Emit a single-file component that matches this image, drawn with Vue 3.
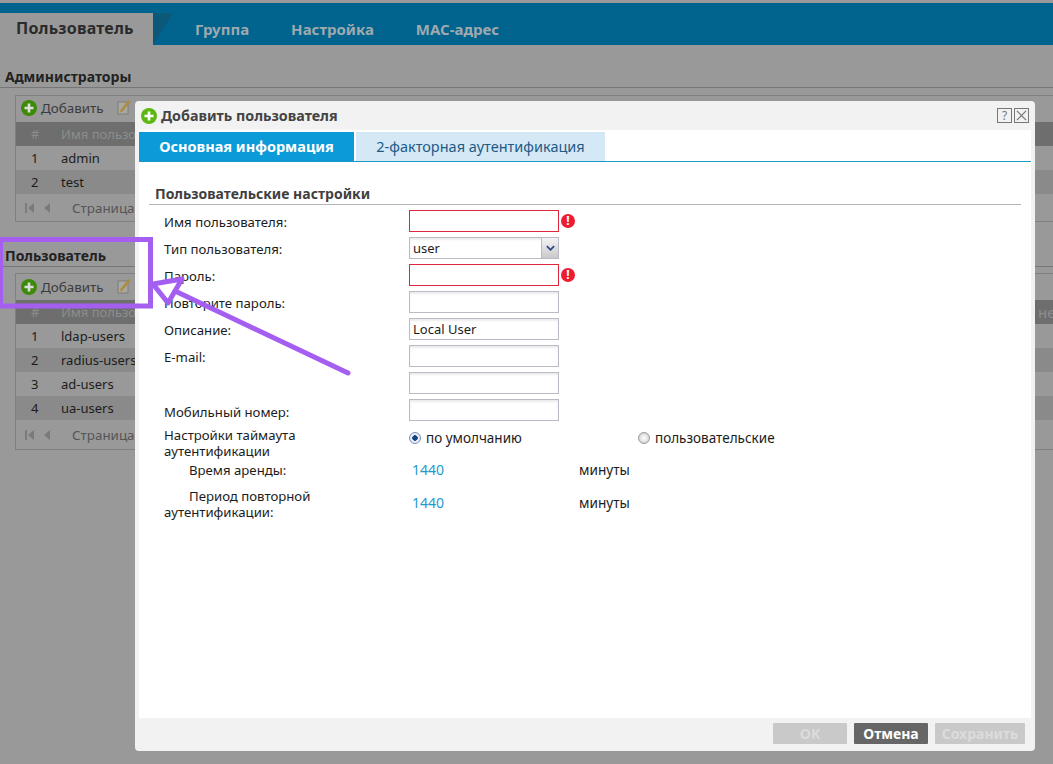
<template>
  <div class="page">
    <div class="topbar">
      <a class="maintab active">Пользователь</a>
      <span class="notch"></span>
      <a class="maintab first">Группа</a>
      <a class="maintab">Настройка</a>
      <a class="maintab">MAC-адрес</a>
    </div>

    <section v-for="block in blocks" :key="block.title" class="block" :class="block.cls">
      <h2>{{ block.title }}</h2>
      <div class="panel">
        <div class="toolbar">
          <svg class="plus" viewBox="0 0 16 16"><circle cx="8" cy="8" r="8" fill="#3d8a0a" /><path d="M8 3.5v9M3.5 8h9" stroke="#ddd" stroke-width="2.6" /></svg>
          <span>Добавить</span>
          <svg class="edit" viewBox="0 0 14 16"><rect x="1" y="3" width="10" height="12" fill="#a8a8a0" stroke="#7f7f7a" /><path d="M3.5 11l8-10 2 1.5-8 10-2.5 1z" fill="#ae8b3c" /></svg>
        </div>
        <div class="thead"><span class="num">#</span><span>Имя пользователя</span><span class="tail">{{ block.tail }}</span></div>
        <div v-for="(name, i) in block.rows" :key="name" class="row" :class="{ alt: i % 2 }">
          <span class="num">{{ i + 1 }}</span><span>{{ name }}</span>
        </div>
        <div class="pager">
          <svg class="pg" viewBox="0 0 26 12"><path d="M1 1h2v10H1zM10 1v10L4 6zM26 1v10l-6-5z" fill="#7b7b7b" /></svg>
          <span>Страница</span>
        </div>
      </div>
    </section>

    <div class="modal">
      <header class="modal-head">
        <svg class="plus" viewBox="0 0 16 16"><circle cx="8" cy="8" r="8" fill="#5cb811" /><path d="M8 3.5v9M3.5 8h9" stroke="#fff" stroke-width="2.6" /></svg>
        <span class="modal-title">Добавить пользователя</span>
        <span class="head-btn">?</span>
        <span class="head-btn close">
          <svg viewBox="0 0 12 12"><path d="M1 1l10 10M11 1L1 11" stroke="#777" stroke-width="1.4" /></svg>
        </span>
      </header>
      <div class="modal-body">
        <div class="tabs">
          <span class="tab on">Основная информация</span>
          <span class="tab">2-факторная аутентификация</span>
        </div>
        <h3>Пользовательские настройки</h3>
        <div class="form">
          <div class="frow">
            <label>Имя пользователя:</label>
            <div class="inp bad"></div>
            <span class="err">!</span>
          </div>
          <div class="frow">
            <label>Тип пользователя:</label>
            <div class="inp select">user
              <span class="arrow"><svg viewBox="0 0 10 6"><path d="M1 1l4 4 4-4" fill="none" stroke="#2c4a86" stroke-width="2" /></svg></span>
            </div>
          </div>
          <div class="frow">
            <label>Пароль:</label>
            <div class="inp bad"></div>
            <span class="err">!</span>
          </div>
          <div class="frow"><label>Повторите пароль:</label><div class="inp"></div></div>
          <div class="frow"><label>Описание:</label><div class="inp">Local User</div></div>
          <div class="frow"><label>E-mail:</label><div class="inp"></div></div>
          <div class="frow"><label></label><div class="inp"></div></div>
          <div class="frow"><label class="low">Мобильный номер:</label><div class="inp"></div></div>
          <div class="frow tall">
            <label>Настройки таймаута аутентификации</label>
            <div class="radio-a"><i class="radio checked"></i>по умолчанию</div>
            <div class="radio-b"><i class="radio"></i>пользовательские</div>
          </div>
          <div class="frow lease">
            <label class="sub">Время аренды:</label>
            <span class="val">1440</span><span class="unit">минуты</span>
          </div>
          <div class="frow reauth">
            <label class="sub2"><span>Период повторной</span> аутентификации:</label>
            <span class="val">1440</span><span class="unit">минуты</span>
          </div>
        </div>
      </div>
      <footer class="modal-foot">
        <span class="btn off ok">OK</span>
        <span class="btn cancel">Отмена</span>
        <span class="btn off save">Сохранить</span>
      </footer>
    </div>

    <!-- пометка поверх скриншота -->
    <svg class="mark" width="1053" height="764" viewBox="0 0 1053 764">
      <rect x="0.5" y="239.5" width="150" height="66.5" fill="none" stroke="#a55ff0" stroke-width="5" />
      <path d="M348 373L175 291" stroke="#a55ff0" stroke-width="5" fill="none" stroke-linecap="round" />
      <path d="M153 284L182 279L168 303Z" stroke="#a55ff0" stroke-width="5" fill="none" stroke-linejoin="round" />
    </svg>
  </div>
</template>

<script setup>
const blocks = [
  { title: 'Администраторы', cls: 'admins', tail: 'И', rows: ['admin', 'test'] },
  { title: 'Пользователь', cls: 'users', tail: 'нен', rows: ['ldap-users', 'radius-users', 'ad-users', 'ua-users'] },
]
</script>

<style>
html, body {
  margin: 0;
  background: #999;
}
</style>

<style scoped>
.page {
  position: relative;
  width: 1053px;
  height: 764px;
  overflow: hidden;
  background: #999;
  font-family: "Noto Sans", "DejaVu Sans", sans-serif;
  font-size: 13px;
  color: #1c1c1c;
  padding-top: 3px;
  box-sizing: border-box;
}
.topbar {
  height: 42px;
  background: #00648e;
  display: flex;
  align-items: flex-end;
  font-weight: 700;
  font-size: 15px;
}
.maintab {
  height: 32px;
  line-height: 32px;
  color: #9fa9ae;
  margin-right: 42px;
}
.maintab.active {
  width: 153px;
  box-sizing: border-box;
  padding-left: 16px;
  margin: 0;
  background: #999;
  color: #2b2b2b;
  font-size: 16px;
  line-height: 30px;
  letter-spacing: 0.2px;
}
.maintab.first {
  margin-left: 22px;
}
.notch {
  width: 0;
  height: 0;
  border-top: 32px solid #0b5878;
  border-right: 20px solid transparent;
}
.block h2 {
  margin: 0;
  font-size: 14px;
  line-height: 20px;
  font-weight: 700;
  color: #222;
  padding-left: 5px;
  border-bottom: 1px solid #777;
}
.admins {
  margin-top: 22px;
}
.users {
  margin-top: 24px;
}
.panel {
  margin: 7px 0 0 15px;
  width: 1045px;
  border: 1px solid #808080;
  background: #999;
  color: #1c1c1c;
}
.users .panel {
  margin-top: 6px;
}
.toolbar {
  height: 26px;
  display: flex;
  align-items: center;
  padding: 0 0 2px 5px;
  box-sizing: border-box;
  color: #3c3c3c;
  font-size: 13.4px;
}
.users .toolbar {
  padding-bottom: 0;
}
.toolbar .plus {
  margin-right: 4px;
}
.plus {
  width: 16px;
  height: 16px;
  flex: none;
}
.edit {
  width: 14px;
  height: 16px;
  margin: -3px 0 0 13px;
}
.thead {
  height: 24px;
  display: flex;
  align-items: center;
  background: #6e6e6e;
  color: #8d8d8d;
}
.tail {
  margin-left: auto;
  overflow: hidden;
  white-space: nowrap;
  font-size: 15px;
}
.admins .tail {
  width: 9px;
}
.users .tail {
  width: 23px;
}
.row {
  height: 24px;
  display: flex;
  align-items: center;
}
.row.alt {
  background: #8a8a8a;
}
.num {
  width: 45px;
  padding-left: 15px;
  box-sizing: border-box;
}
.pager {
  height: 27px;
  display: flex;
  align-items: center;
  padding-left: 8px;
  color: #555;
  font-size: 13.4px;
}
.users .pager {
  height: 29px;
}
.pg {
  width: 26px;
  height: 12px;
  margin-right: 22px;
}

.modal {
  position: absolute;
  left: 135px;
  top: 101px;
  width: 900px;
  height: 650px;
  background: #f2f2f2;
  border-radius: 4px;
  display: flex;
  flex-direction: column;
}
.modal-head {
  height: 29px;
  flex: none;
  display: flex;
  align-items: center;
  padding: 0 6px;
  font-weight: 700;
  font-size: 14.3px;
  color: #444;
}
.modal-title {
  margin-left: 4px;
  flex: 1;
}
.head-btn {
  width: 13px;
  height: 13px;
  border: 1px solid #777;
  margin-left: 2px;
  font-size: 12px;
  font-weight: 400;
  line-height: 13px;
  text-align: center;
  color: #777;
  display: flex;
  align-items: center;
  justify-content: center;
}
.close svg {
  width: 11px;
  height: 11px;
}
.modal-body {
  flex: 1;
  margin: 0 4px;
  background: #fff;
  padding-top: 2px;
}
.tabs {
  display: flex;
  gap: 2px;
  height: 29px;
  border-bottom: 1px solid #1d9bc4;
  font-size: 14.5px;
}
.tab {
  width: 249px;
  background: #d4e8f6;
  color: #1f5a85;
  text-align: center;
  line-height: 29px;
}
.tab.on {
  width: 215px;
  background: #0a9bd8;
  color: #fff;
  font-weight: 700;
}
h3 {
  margin: 22px 10px 0 10px;
  padding: 0 0 1px 6px;
  font-size: 14px;
  line-height: 19px;
  font-weight: 700;
  color: #3f3f3f;
  border-bottom: 1px solid #b5b5b5;
}
.form {
  padding: 5px 0 0 25px;
  font-size: 13.2px;
}
.frow {
  display: flex;
  height: 27px;
  align-items: flex-start;
}
.frow label {
  width: 245px;
  flex: none;
  line-height: 25px;
}
.frow label.low {
  line-height: 26px;
}
.inp {
  width: 150px;
  height: 22px;
  box-sizing: border-box;
  border: 1px solid #b9bcc4;
  box-shadow: inset 0 2px 2px #ececec;
  padding-left: 3px;
  line-height: 20px;
  position: relative;
  font-size: 13px;
}
.inp.bad {
  border-color: #e0283c;
  box-shadow: none;
}
.err {
  width: 14px;
  height: 14px;
  margin: 4px 0 0 2px;
  border-radius: 50%;
  background: #ee1c31;
  color: #fff;
  font-weight: 700;
  font-size: 12px;
  line-height: 14px;
  text-align: center;
}
.arrow {
  position: absolute;
  right: 0;
  top: 0;
  bottom: 0;
  width: 16px;
  background: linear-gradient(#f4f4f4, #c9c9c9);
  border-left: 1px solid #b9bcc4;
  display: flex;
  align-items: center;
  justify-content: center;
}
.arrow svg {
  width: 9px;
  height: 6px;
}
.tall {
  height: 32px;
  margin-top: 1px;
}
.tall label {
  line-height: 16px;
  width: 160px;
  margin-right: 85px;
}
.radio-a,
.radio-b {
  display: flex;
  align-items: center;
  line-height: 18px;
  padding-top: 2px;
  font-size: 13.5px;
}
.radio-a {
  width: 229px;
}
.radio {
  width: 12px;
  height: 12px;
  margin-right: 5px;
  border-radius: 50%;
  border: 1px solid #9a9a9a;
  background: radial-gradient(#fff, #c8c8c8);
  box-sizing: border-box;
}
.radio.checked {
  background: radial-gradient(#17457d 0 2.5px, #e8eefb 3px);
  border-color: #7c8dad;
}
.lease {
  height: 24px;
  line-height: 22px;
}
.frow.lease label {
  line-height: 22px;
}
.frow .sub {
  padding-left: 25px;
  box-sizing: border-box;
}
.val {
  width: 170px;
  padding-left: 3px;
  box-sizing: border-box;
  color: #1d9ad0;
  font-size: 14px;
}
.unit {
  font-size: 13.6px;
}
.reauth {
  margin-top: 5px;
  height: 32px;
  line-height: 30px;
}
.frow .sub2 {
  line-height: 16px;
}
.sub2 span {
  display: block;
  padding-left: 25px;
}
.modal-foot {
  height: 33px;
  flex: none;
  display: flex;
  justify-content: flex-end;
  gap: 7px;
  padding: 5px 10px 0 0;
  box-sizing: border-box;
}
.btn {
  height: 21px;
  line-height: 21px;
  text-align: center;
  font-weight: 700;
  font-size: 14px;
  border-radius: 1px;
}
.off {
  background: #c9c9c9;
  color: #dcdcdc;
}
.ok {
  width: 74px;
}
.cancel {
  width: 74px;
  background: #666;
  color: #fff;
}
.save {
  width: 90px;
}
.mark {
  position: absolute;
  left: 0;
  top: 0;
  pointer-events: none;
}
</style>
